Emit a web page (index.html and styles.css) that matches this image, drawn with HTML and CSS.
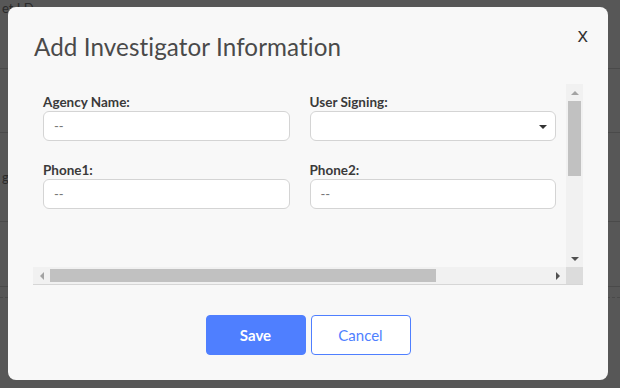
FILE: index.html
```html
<!DOCTYPE html>
<html lang="en">
<head>
  <meta charset="UTF-8">
  <title>Add Investigator Information</title>
  <link rel="stylesheet" href="styles.css">
</head>
<body>

  <div class="page">
    <div class="page-row r1"><span class="cell">et I D</span></div>
    <div class="page-row r2"></div>
    <div class="page-row r3"><span class="cell">g</span></div>
    <div class="page-row r4"></div>
    <div class="page-row r5"></div>
  </div>

  <div class="overlay">
    <div class="modal">
      <div class="modal-header">
        <h2>Add Investigator Information</h2>
        <span class="close">x</span>
      </div>

      <div class="scroll-box">
        <div class="scroll-content">
          <div class="form-grid">
            <div class="field">
              <label>Agency Name:</label>
              <div class="input">--</div>
            </div>
            <div class="field">
              <label>User Signing:</label>
              <div class="input select"><span class="caret"></span></div>
            </div>
            <div class="field">
              <label>Phone1:</label>
              <div class="input">--</div>
            </div>
            <div class="field">
              <label>Phone2:</label>
              <div class="input">--</div>
            </div>
          </div>
        </div>
        <div class="vbar">
          <span class="arrow up"></span>
          <div class="vtrack"><div class="vthumb"></div></div>
          <span class="arrow down"></span>
        </div>
        <div class="hbar">
          <span class="arrow left"></span>
          <div class="htrack"><div class="hthumb"></div></div>
          <span class="arrow right"></span>
        </div>
        <div class="corner"></div>
      </div>

      <div class="modal-footer">
        <button class="btn btn-save">Save</button>
        <button class="btn btn-cancel">Cancel</button>
      </div>
    </div>
  </div>

</body>
</html>
```

FILE: styles.css
```css
body {
  margin: 0;
  background: #575757;
  font-family: Lato, "Open Sans", Arial, sans-serif;
  height: 388px;
  overflow: hidden;
}

/* page behind the backdrop */
.page-row {
  border-bottom: 1px solid #4a4a4a;
  color: #2a2a2a;
  font-size: 13px;
  display: flex;
}
.page-row .cell {
  padding: 0 2px;
}
.r1 { height: 68px; }
.r2 { height: 63px; }
.r3 { height: 88px; align-items: center; }
.r4 { height: 64px; }
.r5 { height: 10px; border-bottom: 1px dashed #4a4a4a; }

.overlay {
  position: fixed;
  top: 0;
  left: 0;
  right: 0;
  bottom: 0;
  padding: 7px 0 0 8px;
}

.modal {
  width: 600px;
  height: 373px;
  background: #f8f8f8;
  border-radius: 8px;
  box-sizing: border-box;
  padding: 0 25px;
}

.modal-header {
  display: flex;
  justify-content: space-between;
  align-items: flex-start;
  height: 77px;
}
.modal-header h2 {
  margin: 25px 0 0 1px;
  font-size: 24.2px;
  font-weight: 400;
  color: #4a4a4a;
  line-height: 30px;
  letter-spacing: 0.1px;
}
.close {
  margin: 14px -5px 0 0;
  font-size: 20px;
  color: #333;
  font-family: "Open Sans", Arial, sans-serif;
}

.scroll-box {
  display: grid;
  grid-template-columns: 533px 17px;
  grid-template-rows: 183px 17px;
  width: 550px;
  border-bottom: 1px solid #d6d6d6;
}
.scroll-content {
  overflow: hidden;
  padding: 9px 10px 0;
}
.form-grid {
  display: grid;
  grid-template-columns: 1fr 1fr;
  column-gap: 20px;
  row-gap: 20px;
}
.field label {
  display: block;
  font-size: 13.5px;
  font-weight: 700;
  color: #3a3a3a;
  line-height: 18px;
}
.input {
  height: 30px;
  box-sizing: border-box;
  background: #fff;
  border: 1px solid #d4d4d4;
  border-radius: 6px;
  padding: 0 10px;
  display: flex;
  align-items: center;
  font-size: 13px;
  color: #777;
}
.select {
  justify-content: flex-end;
}
.caret {
  width: 0;
  height: 0;
  border-left: 4px solid transparent;
  border-right: 4px solid transparent;
  border-top: 4px solid #333;
  margin: 2px -2px 0 0;
}

/* scrollbars */
.vbar {
  background: #f1f1f1;
  display: flex;
  flex-direction: column;
  align-items: center;
}
.vtrack {
  flex: 1;
  width: 13px;
}
.vthumb {
  height: 75px;
  background: #c1c1c1;
}
.hbar {
  background: #f1f1f1;
  display: flex;
  align-items: center;
}
.htrack {
  flex: 1;
  height: 13px;
}
.hthumb {
  width: 386px;
  height: 13px;
  background: #c1c1c1;
}
.corner {
  background: #dcdcdc;
}
.arrow {
  width: 17px;
  height: 17px;
  display: flex;
  align-items: center;
  justify-content: center;
  flex-shrink: 0;
}
.arrow::before {
  content: "";
  width: 0;
  height: 0;
}
.arrow.up::before {
  border-left: 4px solid transparent;
  border-right: 4px solid transparent;
  border-bottom: 4px solid #a3a3a3;
}
.arrow.down::before {
  border-left: 4px solid transparent;
  border-right: 4px solid transparent;
  border-top: 4px solid #505050;
}
.arrow.left::before {
  border-top: 4px solid transparent;
  border-bottom: 4px solid transparent;
  border-right: 4px solid #a3a3a3;
}
.arrow.right::before {
  border-top: 4px solid transparent;
  border-bottom: 4px solid transparent;
  border-left: 4px solid #505050;
}

.modal-footer {
  display: flex;
  justify-content: center;
  gap: 5px;
  padding-top: 30px;
}
.btn {
  width: 100px;
  height: 40px;
  border-radius: 4px;
  font-family: Lato, "Open Sans", Arial, sans-serif;
  font-size: 15px;
  cursor: pointer;
}
.btn-save {
  background: #4f7fff;
  border: 1px solid #4f7fff;
  color: #fff;
  font-weight: 700;
}
.btn-cancel {
  background: #fff;
  border: 1px solid #4f7fff;
  color: #4f7fff;
}
```
